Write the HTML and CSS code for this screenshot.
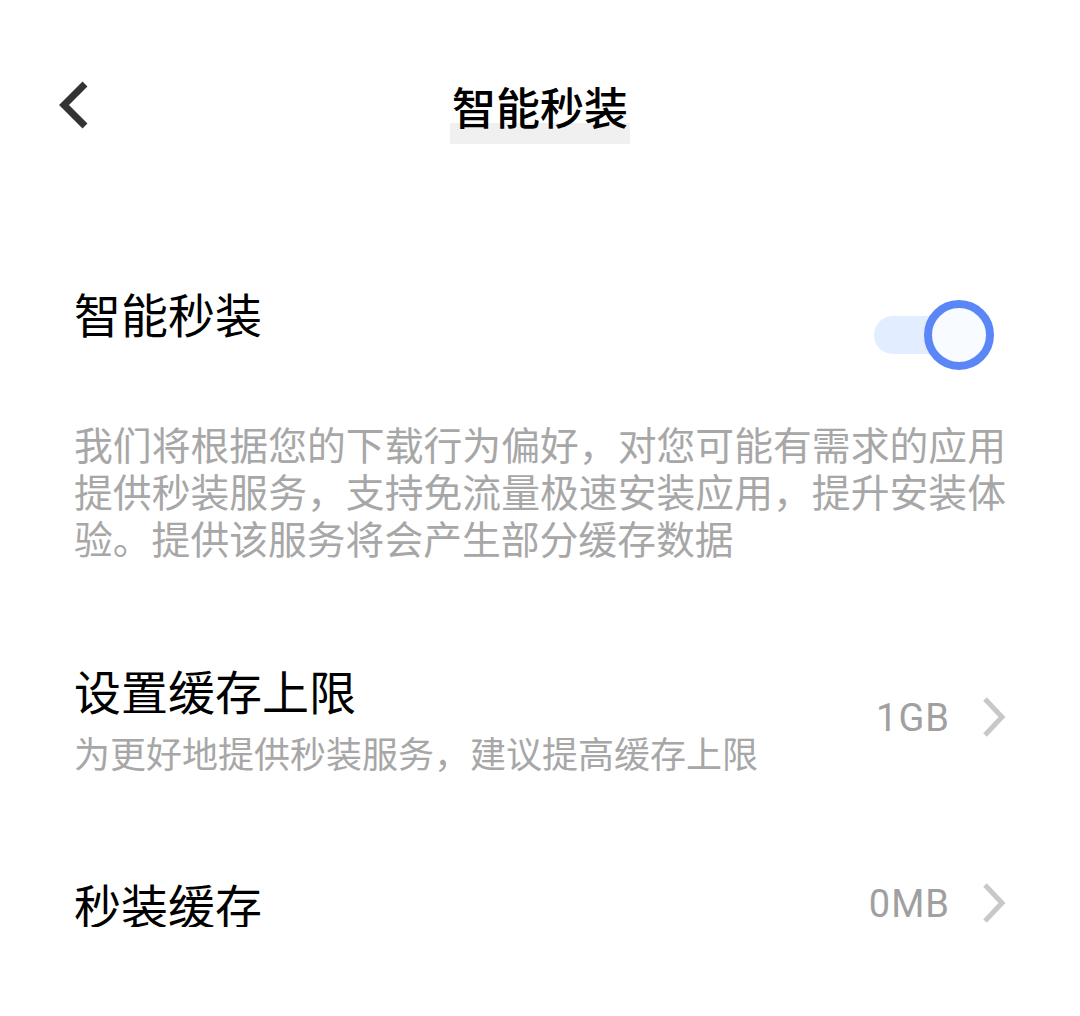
FILE: index.html
```html
<!DOCTYPE html>
<html lang="zh-CN">
<head>
    <meta charset="UTF-8">
    <meta name="viewport" content="width=device-width, initial-scale=1.0">
    <title>智能秒装</title>
    <link rel="stylesheet" href="styles.css">
</head>
<body>
    <!-- Top bar -->
    <div class="header">
        <div class="back">
            <svg width="34" height="52" viewBox="0 0 34 52">
                <polyline points="28,4 7,25 28,46" fill="none" stroke="#333" stroke-width="7"/>
            </svg>
        </div>
        <h1 class="title">智能秒装</h1>
        <div></div>
    </div>

    <!-- Switch section -->
    <div class="switch-row">
        <div class="label">智能秒装</div>
        <div class="toggle">
            <div class="toggle-track"></div>
            <div class="toggle-knob"></div>
        </div>
    </div>
    <p class="desc">我们将根据您的下载行为偏好，对您可能有需求的应用提供秒装服务，支持免流量极速安装应用，提升安装体验。提供该服务将会产生部分缓存数据</p>

    <!-- Settings -->
    <div class="item item-limit">
        <div class="item-text">
            <div class="label">设置缓存上限</div>
            <div class="sub">为更好地提供秒装服务，建议提高缓存上限</div>
        </div>
        <div class="item-value">
            <span>1GB</span>
            <svg width="26" height="44" viewBox="0 0 26 44">
                <polyline points="4,3 21,21 4,39" fill="none" stroke="#c8c8c8" stroke-width="5"/>
            </svg>
        </div>
    </div>

    <div class="item item-cache">
        <div class="item-text">
            <div class="label">秒装缓存</div>
        </div>
        <div class="item-value">
            <span>0MB</span>
            <svg width="26" height="44" viewBox="0 0 26 44">
                <polyline points="4,3 21,21 4,39" fill="none" stroke="#c8c8c8" stroke-width="5"/>
            </svg>
        </div>
    </div>
</body>
</html>
```

FILE: styles.css
```css
body {
    margin: 0;
    background: #fff;
    font-family: "Noto Sans CJK SC", "Noto Sans", sans-serif;
    color: #000;
}
.header {
    display: grid;
    grid-template-columns: 1fr auto 1fr;
    align-items: start;
    height: 216px;
    box-sizing: border-box;
    padding-top: 80px;
}
.back {
    padding-left: 57px;
}
.back svg {
    display: block;
}
.title {
    margin: 4px 0 0;
    width: 180px;
    height: 60px;
    font-size: 44px;
    line-height: 44px;
    font-weight: 500;
    text-align: center;
    background: linear-gradient(to bottom, transparent 39px, #f0f0f0 39px);
}
.switch-row {
    display: flex;
    justify-content: space-between;
    align-items: flex-start;
    margin-top: 73px;
    padding: 0 86px 0 74px;
}
.label {
    font-size: 47px;
    line-height: 47px;
}
.toggle {
    display: flex;
    align-items: center;
    width: 120px;
    height: 70px;
    margin-top: 11px;
}
.toggle-track {
    flex: none;
    width: 100px;
    height: 38px;
    border-radius: 19px;
    background: #e2eeff;
}
.toggle-knob {
    flex: none;
    width: 54px;
    height: 54px;
    margin-left: -50px;
    border: 8px solid #5b86f8;
    border-radius: 50%;
    background: #f8fbff;
}
.desc {
    margin: 50px 0 0;
    padding: 0 74px;
    font-size: 38.8px;
    line-height: 47px;
    color: #a7a7a7;
    text-align: justify;
}
.item {
    display: flex;
    justify-content: space-between;
    align-items: center;
    padding: 0 73px 0 74px;
}
.item-limit {
    margin-top: 105px;
}
.item-cache {
    margin-top: 110px;
}
.sub {
    margin-top: 21px;
    font-size: 36px;
    line-height: 36px;
    color: #a7a7a7;
}
.item-value {
    display: flex;
    align-items: center;
    gap: 31px;
    font-family: Roboto, "Noto Sans", sans-serif;
    font-size: 38px;
    letter-spacing: 1px;
    color: #a0a0a0;
}
.item-value svg {
    display: block;
}
```
